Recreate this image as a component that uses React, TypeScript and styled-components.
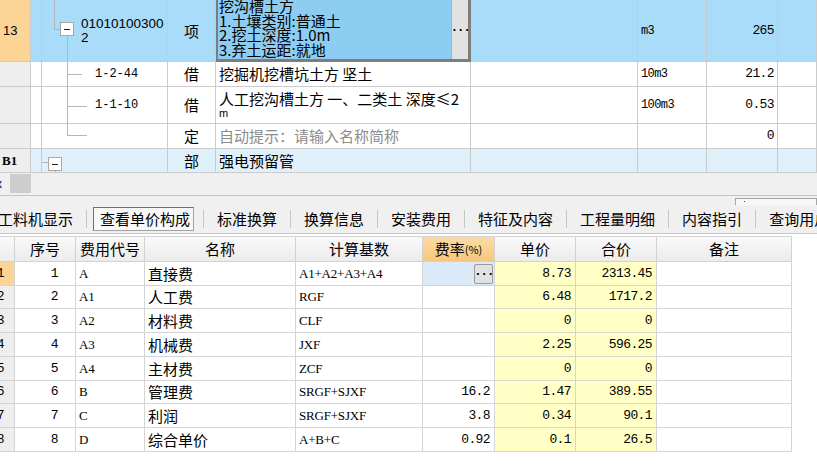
import React from 'react';
import styled, { createGlobalStyle } from 'styled-components';

const GlobalStyle = createGlobalStyle`
  html, body {
    margin: 0;
    padding: 0;
    background: #ffffff;
  }
  body {
    width: 817px;
    height: 470px;
    overflow: hidden;
    font-family: "Noto Sans CJK SC", "Liberation Sans", sans-serif;
    color: #000000;
  }
`;

const CJK = `"Noto Sans CJK SC", "Liberation Sans", sans-serif`;
const MONO = `"Liberation Mono", monospace`;
const SERIF = `"Liberation Serif", serif`;
const LINE = '#cbcbcb';

type Align = 'left' | 'center' | 'right';

const justify = (a?: Align) => (a === 'right' ? 'flex-end' : a === 'center' ? 'center' : 'flex-start');

// ---------- top grid ----------

const TopRow = styled.div<{ $h: number; $bg: string }>`
  display: grid;
  grid-template-columns: 31px 11px 126px 48px 255px 167px 69px 71px 39px;
  height: ${p => p.$h}px;
  background: ${p => p.$bg};
`;

const Cell = styled.div<{ $bg?: string; $align?: Align; $pl?: number; $pr?: number }>`
  box-sizing: border-box;
  display: flex;
  align-items: center;
  justify-content: ${p => justify(p.$align)};
  padding: 0 ${p => p.$pr ?? 3}px 0 ${p => p.$pl ?? 3}px;
  background: ${p => p.$bg ?? 'transparent'};
  border-right: 1px solid ${LINE};
  border-bottom: 1px solid ${LINE};
  overflow: hidden;
  white-space: nowrap;
  min-width: 0;
  font-family: ${CJK};
  font-size: 15px;
  line-height: 16px;
`;

const TreeCell = styled(Cell)`
  padding: 0;
  align-items: stretch;
`;

const TreeText = styled.div<{ $font?: 'sans' | 'mono' }>`
  display: flex;
  flex-direction: column;
  justify-content: center;
  font-family: ${p => (p.$font === 'mono' ? MONO : `"Liberation Sans", sans-serif`)};
  font-size: ${p => (p.$font === 'mono' ? '12px' : '13.5px')};
  line-height: 14px;
`;

const RowHead = styled.span<{ $serif?: boolean }>`
  font-family: ${p => (p.$serif ? SERIF : `"Liberation Sans", sans-serif`)};
  font-size: 13px;
  font-weight: ${p => (p.$serif ? 600 : 400)};
`;

const Num = styled.span<{ $size?: number }>`
  font-family: ${MONO};
  font-size: ${p => p.$size ?? 13}px;
  letter-spacing: -0.6px;
`;

const Hint = styled.span`
  color: #8c8c8c;
`;

const EditCell = styled.div`
  box-sizing: border-box;
  display: flex;
  background: #8ecdf2;
  border-left: 2px solid #7d7d7d;
  border-right: 3px solid #7d7d7d;
  border-bottom: 3px solid #7d7d7d;
  overflow: hidden;
`;

const EditText = styled.div`
  flex: 1;
  margin-top: -1px;
  padding-left: 1px;
  font-family: ${CJK};
  font-size: 15px;
  line-height: 14.6px;
  white-space: nowrap;
`;

const DotsButton = styled.div<{ $small?: boolean }>`
  box-sizing: border-box;
  display: flex;
  align-items: center;
  justify-content: center;
  width: ${p => (p.$small ? 19 : 17)}px;
  height: ${p => (p.$small ? '20px' : 'auto')};
  background: #e2e2e2;
  border-left: 1px solid ${p => (p.$small ? '#9a9a9a' : '#b0b0b0')};
  ${p => (p.$small ? 'border: 1px solid #9a9a9a; border-radius: 2px; margin-right: 1px;' : '')}
  font-family: ${MONO};
  font-size: 13px;
  font-weight: 700;
  letter-spacing: -1.5px;
  line-height: 1;
  padding-bottom: 5px;
`;

const Wrap2 = styled.div`
  display: flex;
  flex-direction: column;
  line-height: 15px;
  padding-top: 1px;
`;

const SmallM = styled.span`
  font-family: "Liberation Sans", sans-serif;
  font-size: 11px;
  line-height: 14px;
  color: #000000;
`;

const TreeSvg = styled.svg`
  flex: none;
  display: block;
`;

const TL = '#b6b6b6';

const Minus = ({ x, y }: { x: number; y: number }) => (
  <>
    <rect x={x + 0.5} y={y + 0.5} width={13} height={13} fill="#ffffff" stroke="#a8a8a8" />
    <line x1={x + 4} y1={y + 7.5} x2={x + 10} y2={y + 7.5} stroke="#202020" />
  </>
);

const TreeItem = () => (
  <TreeSvg width={39} height={61}>
    <line x1={12.5} y1={0} x2={12.5} y2={29} stroke={TL} />
    <line x1={12} y1={29.5} x2={18} y2={29.5} stroke={TL} />
    <line x1={25.5} y1={36} x2={25.5} y2={61} stroke={TL} />
    <Minus x={18} y={22} />
  </TreeSvg>
);

const TreeChild = ({ h, y, last, len }: { h: number; y: number; last?: boolean; len: number }) => (
  <TreeSvg width={53} height={h}>
    <line x1={25.5} y1={0} x2={25.5} y2={last ? y + 0.5 : h} stroke={TL} />
    <line x1={25} y1={y + 0.5} x2={len} y2={y + 0.5} stroke={TL} />
  </TreeSvg>
);

const TreeSection = () => (
  <TreeSvg width={30} height={23}>
    <line x1={0} y1={13.5} x2={6} y2={13.5} stroke={TL} />
    <line x1={13.5} y1={20} x2={13.5} y2={23} stroke={TL} />
    <Minus x={6} y={8} />
  </TreeSvg>
);

// ---------- middle strip ----------

const HScroll = styled.div`
  display: flex;
  align-items: stretch;
  height: 22px;
  background: #f0f0f0;
`;

const CutChar = styled.span`
  font-family: "Liberation Sans", sans-serif;
  font-size: 12px;
  margin-left: -4px;
  width: 14px;
  line-height: 22px;
`;

const Thumb = styled.div`
  width: 21px;
  margin: 1px 0 2px 0;
  background: #cdcdcd;
`;

const Splitter = styled.div`
  display: flex;
  justify-content: flex-end;
  align-items: flex-end;
  height: 10px;
  box-sizing: border-box;
  border-top: 1px solid #c4c4c4;
  background: #f0f0f0;
`;

const MiniBar = styled.div`
  width: 82px;
  height: 7px;
  box-sizing: border-box;
  border: 1px solid #a6a6a6;
  border-bottom: none;
  background: #f7f7f7;
  position: relative;
  &::after {
    content: '';
    position: absolute;
    left: 8px;
    top: 2px;
    width: 1px;
    height: 1px;
    background: #3050a0;
  }
`;

// ---------- tab bar ----------

const TabBar = styled.div`
  display: flex;
  align-items: center;
  height: 29px;
  box-sizing: border-box;
  border-bottom: 1px solid #c8c8c8;
  background: #f0f0f0;
  margin-left: -15px;
  white-space: nowrap;
  font-family: ${CJK};
  font-size: 15px;
`;

const Tab = styled.div<{ $active?: boolean }>`
  flex: none;
  padding: ${p => (p.$active ? '0 9px 0 6px' : '0 13px')};
  line-height: 20px;
`;

const TabBox = styled.div`
  padding: 1px 3px 1px 6px;
  border: 1px solid #a2a2a2;
  border-top-color: #6e6e6e;
  border-left-color: #6e6e6e;
  background: #f8f8f8;
`;

const TabSep = styled.div`
  flex: none;
  width: 1px;
  height: 18px;
  background: #c6c6c6;
`;

// ---------- lower grid ----------

const Lower = styled.div`
  margin-top: 2px;
  margin-left: -16px;
`;

const LowRow = styled.div<{ $h: number }>`
  display: grid;
  grid-template-columns: 31px 61px 69px 151px 127px 72px 81px 81px 135px;
  height: ${p => p.$h}px;
`;

const HeadCell = styled(Cell)<{ $tone?: 'orange' }>`
  justify-content: center;
  border-top: 1px solid #d2d2d2;
  background: ${p =>
    p.$tone === 'orange'
      ? 'linear-gradient(#fcdca4, #f6c67c)'
      : 'linear-gradient(#f9f9f9, #ececec)'};
  border-right-color: #d2d2d2;
  border-bottom-color: #d2d2d2;
`;

const Pct = styled.span`
  font-size: 11px;
`;

const LowCell = styled(Cell)`
  border-right-color: #d4d4d4;
  border-bottom-color: #d4d4d4;
`;

const IdxHead = styled(LowCell)<{ $sel?: boolean }>`
  justify-content: flex-end;
  padding-right: 10px;
  background: ${p => (p.$sel ? '#fcd596' : '#eeeeee')};
`;

const Code = styled.span`
  font-family: ${SERIF};
  font-size: 13px;
  font-weight: 400;
  letter-spacing: -0.2px;
`;

const YELLOW = '#ffffc6';

const costRows = [
  { no: 1, code: 'A', name: '直接费', base: 'A1+A2+A3+A4', rate: '', unit: '8.73', total: '2313.45', h: 24 },
  { no: 2, code: 'A1', name: '人工费', base: 'RGF', rate: '', unit: '6.48', total: '1717.2', h: 23 },
  { no: 3, code: 'A2', name: '材料费', base: 'CLF', rate: '', unit: '0', total: '0', h: 24 },
  { no: 4, code: 'A3', name: '机械费', base: 'JXF', rate: '', unit: '2.25', total: '596.25', h: 24 },
  { no: 5, code: 'A4', name: '主材费', base: 'ZCF', rate: '', unit: '0', total: '0', h: 24 },
  { no: 6, code: 'B', name: '管理费', base: 'SRGF+SJXF', rate: '16.2', unit: '1.47', total: '389.55', h: 23 },
  { no: 7, code: 'C', name: '利润', base: 'SRGF+SJXF', rate: '3.8', unit: '0.34', total: '90.1', h: 24 },
  { no: 8, code: 'D', name: '综合单价', base: 'A+B+C', rate: '0.92', unit: '0.1', total: '26.5', h: 24 },
];

const tabs = ['工料机显示', '查看单价构成', '标准换算', '换算信息', '安装费用', '特征及内容', '工程量明细', '内容指引', '查询用户清单'];

const BLUE = '#a9dcf8';
const SECTION = '#dff0fb';
const GREY = '#eeeeee';

const App = () => {
  return (
    <>
      <GlobalStyle />
      <TopRow $h={62} $bg={BLUE}>
        <Cell $bg="#fcd596">
          <RowHead>13</RowHead>
        </Cell>
        <Cell />
        <TreeCell>
          <TreeItem />
          <TreeText>
            <span>01010100300</span>
            <span>2</span>
          </TreeText>
        </TreeCell>
        <Cell $align="center">项</Cell>
        <EditCell>
          <EditText>
            挖沟槽土方
            <br />
            1.土壤类别:普通土
            <br />
            2.挖土深度:1.0m
            <br />
            3.弃土运距:就地
          </EditText>
          <DotsButton>...</DotsButton>
        </EditCell>
        <Cell />
        <Cell>
          <Num $size={12}>m3</Num>
        </Cell>
        <Cell $align="right">
          <Num>265</Num>
        </Cell>
        <Cell />
      </TopRow>

      <TopRow $h={25} $bg="#ffffff">
        <Cell $bg={GREY} />
        <Cell />
        <TreeCell>
          <TreeChild h={24} y={12} len={40} />
          <TreeText $font="mono">1-2-44</TreeText>
        </TreeCell>
        <Cell $align="center">借</Cell>
        <Cell>挖掘机挖槽坑土方 坚土</Cell>
        <Cell />
        <Cell>
          <Num $size={12}>10m3</Num>
        </Cell>
        <Cell $align="right">
          <Num>21.2</Num>
        </Cell>
        <Cell />
      </TopRow>

      <TopRow $h={37} $bg="#ffffff">
        <Cell $bg={GREY} />
        <Cell />
        <TreeCell>
          <TreeChild h={36} y={19} len={45} />
          <TreeText $font="mono">1-1-10</TreeText>
        </TreeCell>
        <Cell $align="center">借</Cell>
        <Cell>
          <Wrap2>
            <span>人工挖沟槽土方 一、二类土 深度≤2</span>
            <SmallM>m</SmallM>
          </Wrap2>
        </Cell>
        <Cell />
        <Cell>
          <Num $size={12}>100m3</Num>
        </Cell>
        <Cell $align="right">
          <Num>0.53</Num>
        </Cell>
        <Cell />
      </TopRow>

      <TopRow $h={25} $bg="#ffffff">
        <Cell $bg={GREY} />
        <Cell />
        <TreeCell>
          <TreeChild h={24} y={11} len={45} last />
        </TreeCell>
        <Cell $align="center">定</Cell>
        <Cell>
          <Hint>自动提示：请输入名称简称</Hint>
        </Cell>
        <Cell />
        <Cell />
        <Cell $align="right">
          <Num>0</Num>
        </Cell>
        <Cell />
      </TopRow>

      <TopRow $h={24} $bg={SECTION}>
        <Cell $bg={GREY} $pl={2}>
          <RowHead $serif>B1</RowHead>
        </Cell>
        <Cell />
        <TreeCell>
          <TreeSection />
        </TreeCell>
        <Cell $align="center">部</Cell>
        <Cell>强电预留管</Cell>
        <Cell />
        <Cell />
        <Cell />
        <Cell />
      </TopRow>

      <HScroll>
        <CutChar>x</CutChar>
        <Thumb />
      </HScroll>
      <Splitter>
        <MiniBar />
      </Splitter>

      <TabBar>
        {tabs.map((t, i) => (
          <React.Fragment key={t}>
            {i > 0 && <TabSep />}
            {i === 1 ? (
              <Tab $active>
                <TabBox>{t}</TabBox>
              </Tab>
            ) : (
              <Tab>{t}</Tab>
            )}
          </React.Fragment>
        ))}
      </TabBar>

      <Lower>
        <LowRow $h={26}>
          <HeadCell />
          <HeadCell>序号</HeadCell>
          <HeadCell>费用代号</HeadCell>
          <HeadCell>名称</HeadCell>
          <HeadCell>计算基数</HeadCell>
          <HeadCell $tone="orange">
            费率<Pct>(%)</Pct>
          </HeadCell>
          <HeadCell>单价</HeadCell>
          <HeadCell>合价</HeadCell>
          <HeadCell>备注</HeadCell>
        </LowRow>
        {costRows.map((r, i) => (
          <LowRow key={r.no} $h={r.h}>
            <IdxHead $sel={i === 0}>
              <Num>{r.no}</Num>
            </IdxHead>
            <LowCell $align="right" $pr={17}>
              <Num>{r.no}</Num>
            </LowCell>
            <LowCell>
              <Code>{r.code}</Code>
            </LowCell>
            <LowCell>{r.name}</LowCell>
            <LowCell>
              <Code>{r.base}</Code>
            </LowCell>
            {i === 0 ? (
              <LowCell $align="right" $bg="#dbeaf8" $pr={0}>
                <DotsButton $small>...</DotsButton>
              </LowCell>
            ) : (
              <LowCell $align="right" $pr={4}>
                <Num>{r.rate}</Num>
              </LowCell>
            )}
            <LowCell $align="right" $bg={YELLOW} $pr={4}>
              <Num>{r.unit}</Num>
            </LowCell>
            <LowCell $align="right" $bg={YELLOW} $pr={4}>
              <Num>{r.total}</Num>
            </LowCell>
            <LowCell />
          </LowRow>
        ))}
      </Lower>
    </>
  );
};

export default App;
